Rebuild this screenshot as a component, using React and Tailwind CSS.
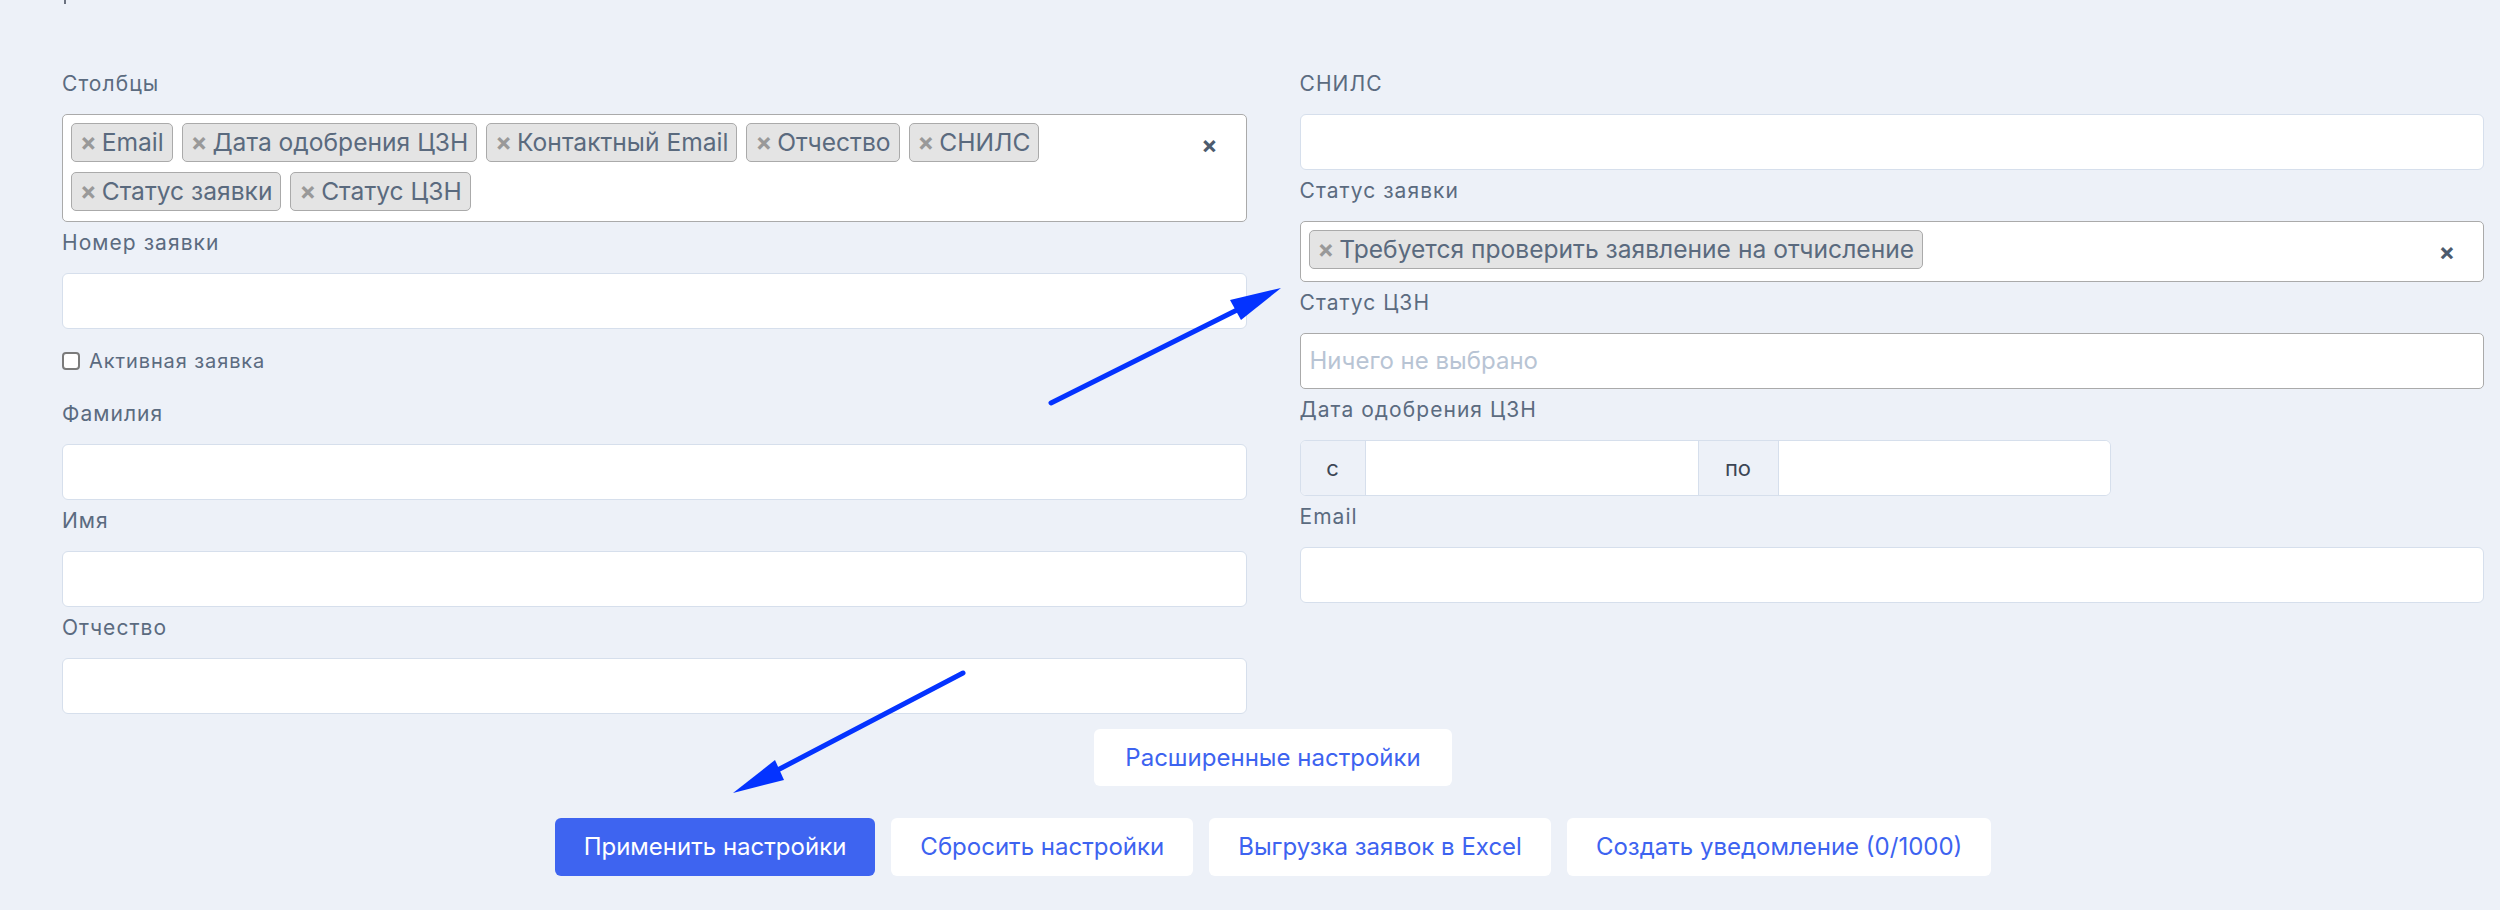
import React from 'react';

const columns = ['Email', 'Дата одобрения ЦЗН', 'Контактный Email', 'Отчество', 'СНИЛС', 'Статус заявки', 'Статус ЦЗН'];

const Label = ({ children }) => (
  <div className="pt-[5px] mb-[14px] leading-[32px] text-[21px] tracking-[0.05em] text-[#5b6b80]">{children}</div>
);

const TextInput = () => (
  <input
    type="text"
    className="block h-[56px] w-full rounded-[6px] border border-[#d6dfec] bg-white px-[12px] text-[24px] text-[#4a5568] outline-none"
  />
);

const Tag = ({ children }) => (
  <span className="inline-flex h-[39px] items-center rounded-[5px] border border-[#aaaaaa] bg-[#e4e4e4] pl-[8px] pr-[8px] text-[24.6px] text-[#5a6a7e]">
    <span className="mr-[5px] font-bold text-[#999999]">×</span>
    {children}
  </span>
);

const MultiSelect = ({ items }) => (
  <div className="flex items-start rounded-[5px] border border-[#aaaaaa] bg-white pt-[8px] pb-[10px] pl-[8px]">
    <div className="flex flex-1 flex-wrap gap-x-[9px] gap-y-[10px]">
      {items.map(item => (
        <Tag key={item}>{item}</Tag>
      ))}
    </div>
    <span className="ml-[12px] mr-[28px] mt-[2px] leading-[39px] text-[24px] font-bold text-[#4d5b6d]">×</span>
  </div>
);

const Arrow = ({ d, head }) => (
  <g>
    <path d={d} stroke="#0433ff" strokeWidth="5" strokeLinecap="round" fill="none" />
    <polygon points={head} fill="#0433ff" />
  </g>
);

const App = () => {
  return (
    <div className="relative min-h-screen bg-[#edf1f8] font-[Inter,sans-serif]">
      <div className="ml-[62px] w-[2422px]">
        <div className="ml-[2px] h-[4px] w-[2px] bg-[#6b7280]" />

        <div className="mt-[59px] grid grid-cols-2 gap-x-[53px]">
          {/* left column */}
          <div>
            <Label>Столбцы</Label>
            <MultiSelect items={columns} />

            <Label>Номер заявки</Label>
            <TextInput />

            <label className="my-[17px] flex h-[30px] items-center gap-[9px]">
              <input
                type="checkbox"
                className="h-[18px] w-[18px] appearance-none rounded-[4px] border-2 border-[#7b7b7b] bg-white"
              />
              <span className="text-[20px] tracking-[0.045em] text-[#5b6b80]">Активная заявка</span>
            </label>

            <Label>Фамилия</Label>
            <TextInput />

            <Label>Имя</Label>
            <TextInput />

            <Label>Отчество</Label>
            <TextInput />
          </div>

          {/* right column */}
          <div>
            <Label>СНИЛС</Label>
            <TextInput />

            <Label>Статус заявки</Label>
            <MultiSelect items={['Требуется проверить заявление на отчисление']} />

            <Label>Статус ЦЗН</Label>
            <div className="flex h-[56px] items-center rounded-[5px] border border-[#aaaaaa] bg-white px-[9px] text-[24px] text-[#b8c4d4]">
              Ничего не выбрано
            </div>

            <Label>Дата одобрения ЦЗН</Label>
            <div className="flex h-[56px] w-[811px] overflow-hidden rounded-[6px] border border-[#d6dfec] bg-white">
              <span className="flex w-[65px] items-center justify-center border-r border-[#d6dfec] bg-[#edf1f8] text-[22px] text-[#3c4655]">
                с
              </span>
              <input type="text" className="w-[332px] bg-white px-[12px] text-[24px] outline-none" />
              <span className="flex w-[81px] items-center justify-center border-x border-[#d6dfec] bg-[#edf1f8] text-[22px] text-[#3c4655]">
                по
              </span>
              <input type="text" className="min-w-0 flex-1 bg-white px-[12px] text-[24px] outline-none" />
            </div>

            <Label>Email</Label>
            <TextInput />
          </div>
        </div>

        <div className="mt-[15px] flex justify-center">
          <button className="h-[57px] rounded-[6px] bg-white px-[31px] text-[24px] text-[#3d63f0]">Расширенные настройки</button>
        </div>

        <div className="mt-[32px] flex justify-center gap-[16px]">
          <button className="h-[58px] rounded-[6px] bg-[#3e64f0] px-[29px] text-[24px] text-white">Применить настройки</button>
          <button className="h-[58px] rounded-[6px] bg-white px-[29px] text-[24px] text-[#3d63f0]">Сбросить настройки</button>
          <button className="h-[58px] rounded-[6px] bg-white px-[29px] text-[24px] text-[#3d63f0]">Выгрузка заявок в Excel</button>
          <button className="h-[58px] rounded-[6px] bg-white px-[29px] text-[24px] text-[#3d63f0]">Создать уведомление (0/1000)</button>
        </div>
      </div>

      {/* annotation arrows */}
      <svg className="pointer-events-none absolute left-0 top-0" width="2500" height="910" viewBox="0 0 2500 910">
        <Arrow d="M1051 403 L1245 306" head="1281,288 1230,300 1241,320" />
        <Arrow d="M963 673 L770 774" head="733,793 775,760 784,780" />
      </svg>
    </div>
  );
};

export default App;
